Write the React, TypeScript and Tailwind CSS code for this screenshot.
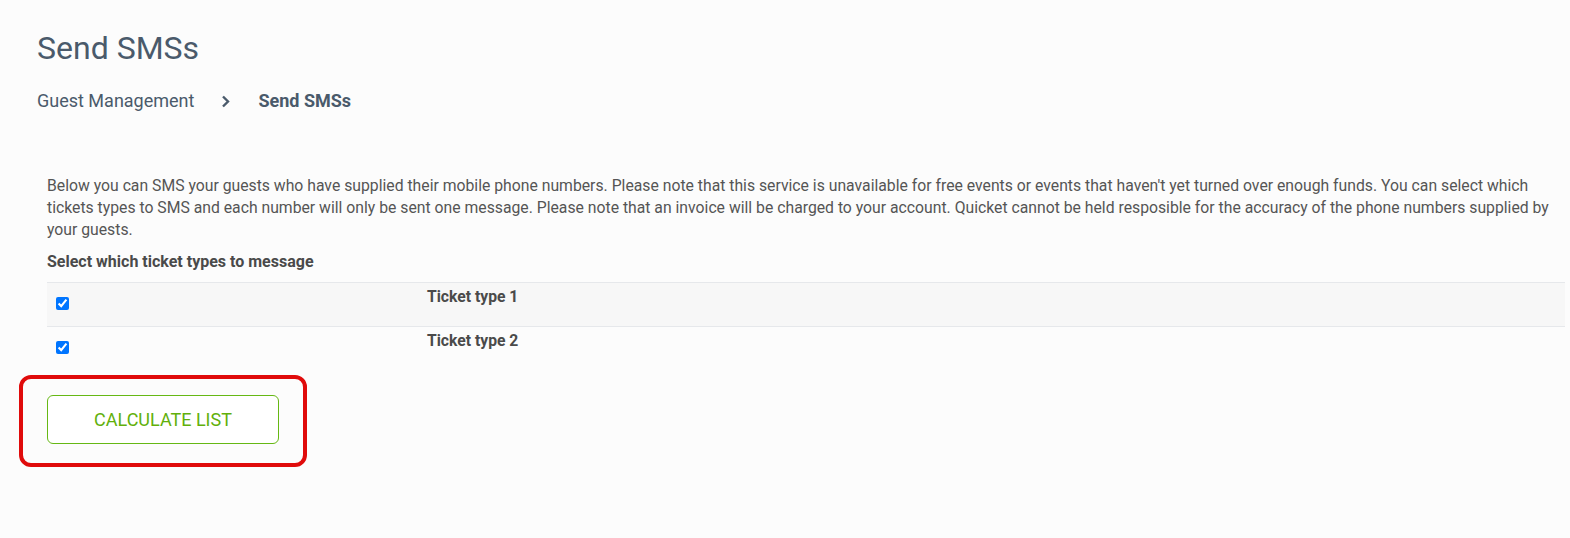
import React from "react";

export default function App() {
  const font = { fontFamily: "Roboto, 'Liberation Sans', sans-serif" };
  return (
    <div className="min-h-[538px] w-full bg-[#fcfcfc]" style={font}>
      <div className="pl-[37px] pr-[5px] pt-[29px]">
        <h1 className="text-[32px] leading-[38px] font-normal text-[#4a5a6b]">Send SMSs</h1>
        <div className="mt-[22px] flex items-center text-[18px] leading-[24px] text-[#4a5a6b]">
          <span>Guest Management</span>
          <svg className="ml-[27px] mr-[28px]" width="9" height="13" viewBox="0 0 9 13" fill="none">
            <path d="M2 1.5L7 6.5L2 11.5" stroke="#4a5a6b" strokeWidth="2.4" />
          </svg>
          <span className="font-bold">Send SMSs</span>
        </div>
        <div className="mt-[62px] pl-[10px] text-[#555555]">
          <p className="text-[15.75px] leading-[22px]">
            Below you can SMS your guests who have supplied their mobile phone numbers. Please note that this service is unavailable for free events or events that haven't yet turned over enough funds. You can select which tickets types to SMS and each number will only be sent one message. Please note that an invoice will be charged to your account. Quicket cannot be held resposible for the accuracy of the phone numbers supplied by your guests.
          </p>
          <div className="mt-[10px] text-[16px] leading-[22px] font-bold text-[#4a4a4a]">
            Select which ticket types to message
          </div>
          <div className="mt-[9px] border-t border-[#e6e8eb]">
            <div className="flex h-[44px] bg-[#f7f7f7] border-b border-[#e6e8eb]">
              <div className="w-[371px] pl-[9px] pt-[14px]">
                <input type="checkbox" defaultChecked className="m-0 h-[13px] w-[13px] block" />
              </div>
              <div className="pl-[9px] pt-[4px] text-[15.7px] leading-[20px] font-bold text-[#4a4a4a]">Ticket type 1</div>
            </div>
            <div className="flex h-[44px]">
              <div className="w-[371px] pl-[9px] pt-[14px]">
                <input type="checkbox" defaultChecked className="m-0 h-[13px] w-[13px] block" />
              </div>
              <div className="pl-[9px] pt-[4px] text-[15.7px] leading-[20px] font-bold text-[#4a4a4a]">Ticket type 2</div>
            </div>
          </div>
          <div className="mt-[24px] relative w-[232px]">
            <button className="w-[232px] h-[49px] rounded-[6px] border border-[#66b814] bg-white text-[18px] uppercase text-[#62b00a]">
              Calculate List
            </button>
            <div className="pointer-events-none absolute left-[-28px] right-[-28px] top-[-20px] bottom-[-23px] rounded-[12px] border-[4px] border-[#e00b0b]" />
          </div>
        </div>
      </div>
    </div>
  );
}
